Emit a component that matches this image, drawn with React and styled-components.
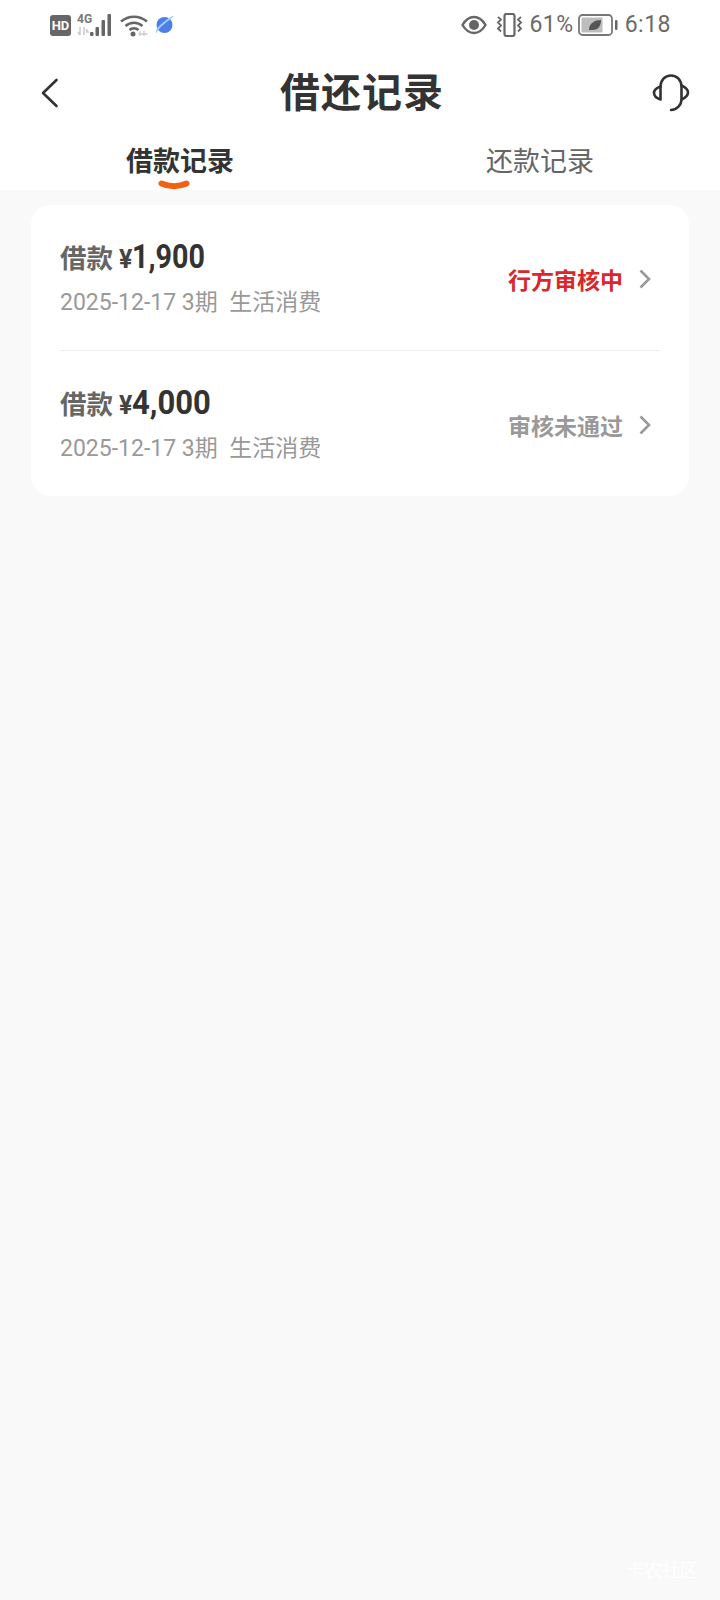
import React from "react";
import styled, { createGlobalStyle } from "styled-components";

const Global = createGlobalStyle`
  html, body { margin: 0; padding: 0; background: #f9f9f9; }
  * { box-sizing: border-box; }
  body { font-family: Roboto, "Noto Sans CJK SC", sans-serif; }
`;
const Page = styled.div`
  position: relative;
  width: 720px;
  height: 1600px;
  background: #f9f9f9;
  overflow: hidden;
`;
const TopPanel = styled.div`
  background: #fff;
  height: 190px;
`;
const StatusBar = styled.div`
  height: 50px;
  padding: 0 49px 0 50px;
  display: flex;
  align-items: center;
  justify-content: space-between;
`;
const StatusGroup = styled.div`
  display: flex;
  align-items: center;
`;
const StatusIcon = styled.svg`
  display: block;
  flex: none;
  margin-left: ${(p) => p.$ml || 0}px;
`;
const StatusText = styled.span`
  font: 400 23px/30px Roboto, sans-serif;
  color: #6a6a6a;
  letter-spacing: 0.5px;
  margin-left: ${(p) => p.$ml || 0}px;
`;
const NavBar = styled.div`
  height: 86px;
  padding: 0 30px 0 40px;
  display: flex;
  align-items: center;
  justify-content: space-between;
`;
const Title = styled.h1`
  margin: -6px 0 0 12px;
  font: 700 40px/48px "Noto Sans CJK SC", sans-serif;
  color: #333;
  letter-spacing: 1px;
`;
const Tabs = styled.div`
  display: grid;
  grid-template-columns: 1fr 1fr;
  height: 54px;
`;
const Tab = styled.div`
  display: flex;
  flex-direction: column;
  align-items: center;
  padding-top: 4px;
  color: ${(p) => (p.$active ? "#333" : "#666")};
  font: ${(p) => (p.$active ? 700 : 400)} 27px/40px "Noto Sans CJK SC", sans-serif;
`;
const Underline = styled.svg`
  display: block;
  margin: 0 12px 0 0;
`;
const Card = styled.section`
  margin: 15px 31px 0;
  background: #fff;
  border-radius: 20px;
  padding: 0 29px;
`;
const Row = styled.div`
  height: ${(p) => (p.$last ? 145 : 146)}px;
  display: flex;
  align-items: center;
  justify-content: space-between;
  border-bottom: ${(p) => (p.$last ? "none" : "1px solid #eeeeee")};
`;
const RowMain = styled.div`
  display: flex;
  flex-direction: column;
  gap: 7px;
`;
const AmountLine = styled.div`
  display: flex;
  align-items: baseline;
  height: 44px;
`;
const Kind = styled.span`
  font: 700 26.5px/44px "Noto Sans CJK SC", sans-serif;
  color: #666;
`;
const Yen = styled.span`
  font: 700 25px/44px Roboto, sans-serif;
  color: #444;
  margin-left: 6px;
`;
const Amount = styled.span`
  display: inline-block;
  font: 700 33px/44px Roboto, sans-serif;
  color: #333;
  transform: scaleX(${(p) => p.$scale});
  transform-origin: left center;
`;
const Meta = styled.div`
  font: 400 23px/34px Roboto, "Noto Sans CJK SC", sans-serif;
  color: #999;
  white-space: pre;
`;
const Side = styled.div`
  display: flex;
  align-items: center;
  gap: 16px;
  padding-right: 9px;
  margin-top: 2px;
`;
const Status = styled.span`
  font: 700 23px/30px "Noto Sans CJK SC", sans-serif;
  color: ${(p) => p.$color};
`;
const Watermark = styled.div`
  position: absolute;
  right: 22px;
  bottom: 21px;
  font: 400 18px/20px "Noto Sans CJK SC", sans-serif;
  color: #fff;
`;

const Hd = () => (
  <StatusIcon width="21" height="21" viewBox="0 0 21 21">
    <rect width="21" height="21" rx="3" fill="#666" />
    <text x="10.5" y="15" textAnchor="middle" fontFamily="Roboto, sans-serif" fontWeight="700" fontSize="13" fill="#fff">HD</text>
  </StatusIcon>
);
const Signal = () => (
  <StatusIcon $ml={6} width="36" height="24" viewBox="0 0 36 24">
    <text x="0" y="10" fontFamily="Roboto, sans-serif" fontWeight="700" fontSize="12" fill="#777">4G</text>
    <path d="M3 14v8M1 19l2 3M7 14v8M9 16l2 3-2 0" stroke="#ccc" strokeWidth="1.600" fill="none" />
    <rect x="13" y="19" width="3.500" height="4" rx="1" fill="#666" />
    <rect x="18.500" y="14" width="3.500" height="9" rx="1" fill="#666" />
    <rect x="24.500" y="7" width="3.500" height="16" rx="1" fill="#666" />
    <rect x="30.500" y="1" width="3.500" height="22" rx="1" fill="#666" />
  </StatusIcon>
);
const Wifi = () => (
  <StatusIcon $ml={7} width="28" height="23" viewBox="0 0 28 23">
    <path d="M1 7.500C8.500 1 19.500 1 27 7.500M5.500 12C10.500 7.500 17.500 7.500 22.500 12M9.500 16C12 13.500 16 13.500 18.500 16" fill="none" stroke="#666" strokeWidth="2.500" />
    <circle cx="13" cy="20" r="2.500" fill="#666" />
    <path d="M20 17v5M24 17v5M18.500 20h9" stroke="#ccc" strokeWidth="1.300" fill="none" />
  </StatusIcon>
);
const Planet = () => (
  <StatusIcon $ml={7} width="19" height="20" viewBox="0 0 19 20">
    <circle cx="9.500" cy="10" r="8" fill="#4d7fe8" />
    <path d="M2 17.500C0 16 5 11 9 8s8-7 9-6" fill="none" stroke="#a6d4f5" strokeWidth="1.800" />
  </StatusIcon>
);
const Eye = () => (
  <StatusIcon width="26" height="20" viewBox="0 0 26 20">
    <path d="M1.500 10C5 4 9 2 13 2s8 2 11.500 8C21 16 17 18 13 18S5 16 1.500 10Z" fill="none" stroke="#666" strokeWidth="2.400" />
    <circle cx="13" cy="10" r="5" fill="#666" />
  </StatusIcon>
);
const Vibrate = () => (
  <StatusIcon $ml={9} width="27" height="24" viewBox="0 0 27 24">
    <rect x="8.500" y="1" width="10" height="22" rx="2" fill="none" stroke="#666" strokeWidth="2.200" />
    <path d="M2 4l3 2.500-3 3 3 3-3 3 3 3M25 4l-3 2.500 3 3-3 3 3 3-3 3" fill="none" stroke="#666" strokeWidth="1.800" />
  </StatusIcon>
);
const Battery = () => (
  <StatusIcon $ml={4} width="40" height="22" viewBox="0 0 40 22">
    <rect x="1" y="1" width="33" height="20" rx="3.500" fill="none" stroke="#777" strokeWidth="1.800" />
    <rect x="3.500" y="3.500" width="21" height="15" rx="1" fill="#bdbdbd" />
    <path d="M11 16c0-7 6-10 12-10 0 6-3 10-8 10-1.500 0-3 0-4 0Z" fill="#555" />
    <rect x="37" y="6" width="2.500" height="10" rx="1" fill="#666" />
  </StatusIcon>
);
const Back = () => (
  <svg width="20" height="30" viewBox="0 0 20 30">
    <path d="M16.500 2 3 15l13.500 13" fill="none" stroke="#333" strokeWidth="2.600" strokeLinecap="round" strokeLinejoin="round" />
  </svg>
);
const Headset = () => (
  <svg width="38" height="38" viewBox="0 0 38 38">
    <path d="M8.500 13C8.500 6 13 1.500 19 1.500S29.500 6 29.500 13V25C29.500 31 25 35.500 19 36" fill="none" stroke="#333" strokeWidth="2.600" strokeLinecap="round" />
    <path d="M8.500 12.500C4 14 2 16.500 2 19s2 5 6.500 6.500ZM29.500 11.500C34 13.500 36 16 36 18.500s-2 5-6.500 7" fill="none" stroke="#333" strokeWidth="2.600" strokeLinejoin="round" />
  </svg>
);
const Chevron = () => (
  <svg width="12" height="20" viewBox="0 0 12 20">
    <path d="M1.500 1.500 10 10l-8.500 8.500" fill="none" stroke="#999" strokeWidth="2.600" />
  </svg>
);

const records = [
  { amount: "1,900", scale: 0.87, status: "行方审核中", color: "#d9272b" },
  { amount: "4,000", scale: 0.94, status: "审核未通过", color: "#999" },
];

export default function App() {
  return (
    <Page>
      <Global />
      <TopPanel>
        <StatusBar>
          <StatusGroup>
            <Hd />
            <Signal />
            <Wifi />
            <Planet />
          </StatusGroup>
          <StatusGroup>
            <Eye />
            <Vibrate />
            <StatusText $ml={6}>61%</StatusText>
            <Battery />
            <StatusText $ml={7}>6:18</StatusText>
          </StatusGroup>
        </StatusBar>
        <NavBar>
          <Back />
          <Title>借还记录</Title>
          <Headset />
        </NavBar>
        <Tabs>
          <Tab $active>
            借款记录
            <Underline width="32" height="11" viewBox="0 0 32 11">
              <path d="M3.500 3.500C11 7 21 7 28.500 3.500" fill="none" stroke="#f4600f" strokeWidth="6" strokeLinecap="round" />
            </Underline>
          </Tab>
          <Tab>还款记录</Tab>
        </Tabs>
      </TopPanel>
      <Card>
        {records.map((r, i) => (
          <Row key={r.amount} $last={i === records.length - 1}>
            <RowMain>
              <AmountLine>
                <Kind>借款</Kind>
                <Yen>¥</Yen>
                <Amount $scale={r.scale}>{r.amount}</Amount>
              </AmountLine>
              <Meta>2025-12-17 3期  生活消费</Meta>
            </RowMain>
            <Side>
              <Status $color={r.color}>{r.status}</Status>
              <Chevron />
            </Side>
          </Row>
        ))}
      </Card>
      <Watermark>卡农社区</Watermark>
    </Page>
  );
}
